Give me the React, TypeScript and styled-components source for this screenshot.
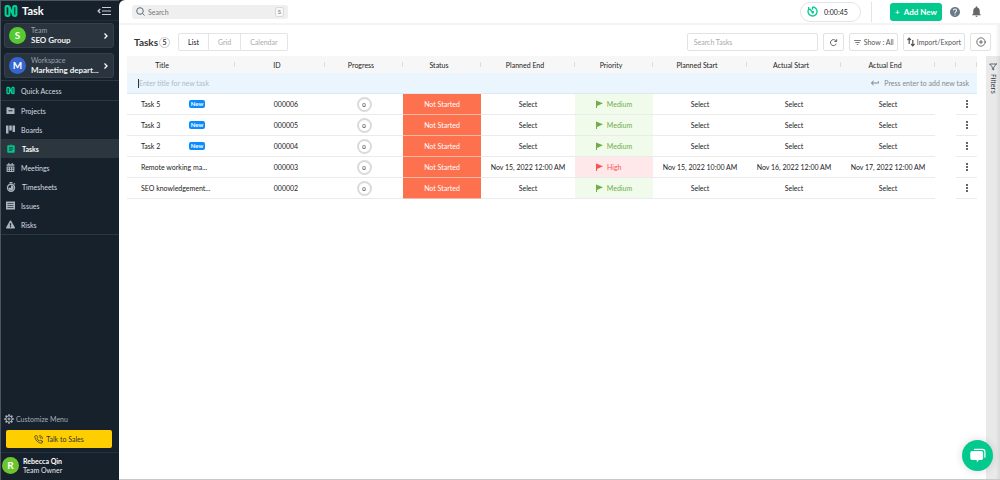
import React from "react";
import styled, { createGlobalStyle, css } from "styled-components";
import {
  MdAssignment,
  MdFilterList,
  MdHelp,
  MdNotifications,
  MdMoreVert,
  MdKeyboardReturn,
} from "react-icons/md";
import { FaCalendarAlt, FaExclamationTriangle } from "react-icons/fa";
import { FiPhoneCall, FiFilter, FiPlusCircle } from "react-icons/fi";

const GlobalStyle = createGlobalStyle`
  *, *::before, *::after { box-sizing: border-box; }
  body { margin: 0; background: #17212c; }
  button, input { font: inherit; color: inherit; margin: 0; }
  button { cursor: pointer; }
`;

const Shell = styled.div`
  display: flex;
  min-height: 100vh;
  font-family: Lato, "Open Sans", sans-serif;
  font-size: 7px;
  line-height: 10px;
  color: #3c4043;
`;

/* ---------- sidebar ---------- */

const Sidebar = styled.aside`
  flex: 0 0 119px;
  min-width: 0;
  display: flex;
  flex-direction: column;
  background: #17212c;
  border-left: 1px solid #4d5660;
  border-top: 1px solid #4d5660;
  color: #c3cad1;
`;

const Brand = styled.div`
  display: flex;
  align-items: center;
  gap: 4px;
  height: 20px;
  padding: 0 7px 0 3px;
  border-bottom: 1px solid #222d38;
`;

const BrandName = styled.span`
  flex: 1;
  font-size: 11px;
  line-height: 16px;
  font-weight: 700;
  color: #fff;
`;

const PlainButton = styled.button`
  display: flex;
  align-items: center;
  justify-content: center;
  padding: 0;
  border: 0;
  background: none;
`;

const Switchers = styled.div`
  display: flex;
  flex-direction: column;
  gap: 5px;
  padding: 2px 5px 2px 3px;
  border-bottom: 1px solid #2c3742;
`;

const SwitcherCard = styled.button`
  display: flex;
  align-items: center;
  gap: 5px;
  height: 25px;
  padding: 0 4px;
  border: 1px solid #35404a;
  border-radius: 3px;
  background: #2a343e;
  text-align: left;
`;

const SwitcherText = styled.span`
  flex: 1;
  min-width: 0;
  display: flex;
  flex-direction: column;
`;

const SwitcherLabel = styled.span`
  line-height: 9px;
  color: #98a2ab;
`;

const SwitcherValue = styled.span`
  white-space: nowrap;
  font-size: 8px;
  line-height: 10px;
  font-weight: 700;
  color: #f1f3f5;
`;

const Avatar = styled.span<{ $color: string }>`
  flex: 0 0 17px;
  height: 17px;
  border-radius: 50%;
  background: ${(p) => p.$color};
  color: #fff;
  font-size: 10px;
  line-height: 17px;
  font-weight: 700;
  text-align: center;
`;

const Menu = styled.nav`
  display: flex;
  flex-direction: column;
  border-bottom: 1px solid #2c3742;
`;

const MenuLink = styled.a<{ $active?: boolean }>`
  display: flex;
  align-items: center;
  gap: 6px;
  height: 19px;
  padding-left: 5px;
  text-decoration: none;
  color: #d6dce1;
  svg { flex: none; color: #a9b4bf; }
  ${(p) =>
    p.$active &&
    css`
      background: #2c363f;
      color: #fff;
      font-weight: 700;
      svg { color: #00c58b; }
    `}
`;

const SidebarFoot = styled.div`
  margin-top: auto;
  display: flex;
  flex-direction: column;
`;

const CustomizeButton = styled(PlainButton)`
  justify-content: flex-start;
  gap: 2px;
  height: 16px;
  padding-left: 3px;
  margin-bottom: 3px;
  color: #a5afb8;
`;

const SalesButton = styled.button`
  display: flex;
  align-items: center;
  justify-content: center;
  gap: 3px;
  height: 18px;
  margin: 0 7px 4px 5px;
  border: 0;
  border-radius: 2px;
  background: #ffce00;
  color: #33332a;
`;

const Profile = styled.div`
  display: flex;
  align-items: center;
  gap: 4px;
  height: 28px;
  padding: 0 0 2px 1px;
  border-top: 1px solid #243240;
  line-height: 9px;
  color: #e3e7ea;
`;

const ProfileName = styled.strong`
  display: block;
  color: #fff;
`;

/* ---------- main ---------- */

const Main = styled.main`
  flex: 1;
  min-width: 0;
  display: flex;
  flex-direction: column;
  background: #fff;
  border-radius: 6px 0 0 0;
  border-bottom: 1px solid #c9c9c9;
`;

const TopBar = styled.header`
  display: flex;
  align-items: center;
  height: 25px;
  padding: 0 17px 0 13px;
  border-bottom: 2px solid #f4f4f4;
`;

const GlobalSearch = styled.label`
  display: flex;
  align-items: center;
  gap: 3px;
  flex: 0 1 156px;
  height: 14px;
  padding: 0 4px;
  margin-right: auto;
  border-radius: 3px;
  background: #efefef;
  color: #5f6b76;
`;

const BareInput = styled.input`
  flex: 1;
  min-width: 0;
  padding: 0;
  border: 0;
  outline: 0;
  background: none;
  &::placeholder { color: #777; opacity: 1; }
`;

const Key = styled.kbd`
  width: 9px;
  height: 10px;
  border: 1px solid #dadada;
  border-radius: 2px;
  background: #f8f8f8;
  font: 700 6px/8px Lato, sans-serif;
  text-align: center;
  color: #999;
`;

const Timer = styled.button`
  display: flex;
  align-items: center;
  gap: 6px;
  width: 61px;
  height: 20px;
  padding: 0 6px;
  border: 1px solid #e4e4e4;
  border-radius: 10px;
  background: #fff;
  color: #222;
`;

const TopDivider = styled.span`
  width: 1px;
  height: 20px;
  margin: 0 18px 0 10px;
  background: #e4e4e4;
`;

const AddNew = styled.button`
  display: flex;
  align-items: center;
  justify-content: center;
  gap: 4px;
  width: 52px;
  height: 18px;
  padding: 0;
  border: 0;
  border-radius: 3px;
  background: #02c98d;
  color: #fff;
  font-size: 8px;
  font-weight: 700;
`;

const TopIcon = styled(PlainButton)<{ $color: string }>`
  width: 13px;
  margin-left: 6px;
  color: ${(p) => p.$color};
  & + & { margin-left: 9px; }
`;

const Toolbar = styled.div`
  display: flex;
  align-items: center;
  gap: 5px;
  height: 31px;
  padding: 3px 9px 0 15px;
  background: linear-gradient(270deg, #efefef, #fff 5px);
`;

const Heading = styled.h1`
  margin: 0;
  font-size: 10px;
  line-height: 14px;
  font-weight: 700;
  color: #333;
`;

const Count = styled.span`
  width: 11px;
  height: 11px;
  margin-left: -4px;
  border: 1px solid #ccc;
  border-radius: 6px;
  font-size: 7px;
  line-height: 9px;
  font-weight: 700;
  text-align: center;
`;

const Tabs = styled.div`
  display: flex;
  height: 18px;
  margin: 0 auto 0 3px;
  border: 1px solid #e4e4e4;
  border-radius: 2px;
`;

const Tab = styled.button<{ $active?: boolean }>`
  padding: 0 9px;
  border: 0;
  background: none;
  color: ${(p) => (p.$active ? "#111" : "#aaa")};
  & + & { border-left: 1px solid #e4e4e4; }
`;

const ToolBox = styled.button<{ $square?: boolean }>`
  display: flex;
  align-items: center;
  justify-content: center;
  gap: 2px;
  height: 18px;
  min-width: 21px;
  padding: 0 3px;
  border: 1px solid #e2e2e2;
  border-radius: 2px;
  background: #fff;
  white-space: nowrap;
  color: #555;
`;

const TaskSearch = styled.input`
  flex: 0 1 131px;
  min-width: 0;
  height: 18px;
  padding: 0 6px;
  border: 1px solid #e2e2e2;
  border-radius: 2px;
  outline: 0;
  &::placeholder { color: #aaa; opacity: 1; }
`;

const Content = styled.div`
  flex: 1;
  display: flex;
  gap: 9px;
  padding-left: 8px;
`;

const TableArea = styled.div`
  flex: 1;
  min-width: 0;
`;

const Table = styled.table`
  width: 100%;
  table-layout: fixed;
  border-collapse: separate;
  border-spacing: 0;
`;

const HeadCell = styled.th<{ $first?: boolean }>`
  height: 17px;
  padding: 0 6px 0 0;
  background: #f7f7f7 linear-gradient(#dcdcdc, #dcdcdc) right center / 1px 5px no-repeat;
  font-weight: 400;
  text-align: center;
  white-space: nowrap;
  color: #222;
  ${(p) => p.$first && css`padding-right: 38px;`}
`;

const NewCell = styled.td`
  height: 21px;
  padding: 0 8px 0 11px;
  background: #ebf5fe;
  border-bottom: 1px solid #dfe8ee;
`;

const NewRow = styled.div`
  display: flex;
  align-items: center;
  gap: 4px;
  color: #888;
`;

const NewTaskInput = styled(BareInput)`
  height: 9px;
  border-left: 1px solid #333;
  &::placeholder { color: #aebbc5; }
`;

const Cell = styled.td<{ $fill?: string; $ink?: string; $line?: string }>`
  height: 21px;
  padding: 0;
  border-bottom: 1px solid ${(p) => p.$line || "#ebebeb"};
  background: ${(p) => p.$fill || "#fff"};
  color: ${(p) => p.$ink || "#222"};
  text-align: center;
  white-space: nowrap;
`;

const GapCell = styled.td`
  padding: 0;
`;

const IdCell = styled(Cell)`
  padding-left: 12px;
`;

const TitleCell = styled(Cell)`
  padding: 0 0 0 14px;
  text-align: left;
`;

const TitleLine = styled.div`
  display: flex;
  align-items: center;
`;

const TitleText = styled.span`
  min-width: 48px;
`;

const NewBadge = styled.span`
  width: 16px;
  height: 8px;
  border-radius: 2px;
  background: #0a8cff;
  color: #fff;
  font-size: 6px;
  line-height: 8px;
  font-weight: 700;
  text-align: center;
`;

const Ring = styled.span`
  display: block;
  width: 15px;
  height: 15px;
  margin: 0 auto;
  border: 2px solid #dadada;
  border-radius: 50%;
  font-size: 6px;
  line-height: 11px;
`;

const Flagged = styled.span`
  display: flex;
  align-items: center;
  justify-content: center;
  gap: 4px;
`;

const FlagText = styled.span`
  min-width: 25px;
  text-align: left;
`;

const RowMenu = styled(PlainButton)`
  width: 100%;
  color: #444;
`;

const FilterRail = styled.button`
  display: flex;
  flex: 0 0 14px;
  flex-direction: column;
  align-items: center;
  gap: 3px;
  padding: 7px 1px 0 0;
  border: 0;
  background: linear-gradient(90deg, #e9e9e9 70%, #d9d9d9);
  color: #222c38;
`;

const RailText = styled.span`
  writing-mode: vertical-rl;
  font-family: "Open Sans", sans-serif;
`;

const ChatButton = styled.button`
  position: fixed;
  right: 7px;
  bottom: 9px;
  display: flex;
  align-items: center;
  justify-content: center;
  width: 31px;
  height: 31px;
  padding: 0;
  border: 0;
  border-radius: 50%;
  background: #02c98d;
  box-shadow: 0 0 8px rgba(0, 0, 0, 0.15);
`;

/* ---------- drawings ---------- */

const Logo = ({ size }: { size: number }) => (
  <svg width={size} height={size} viewBox="0 0 26 24" fill="none" stroke="#00d094" strokeWidth="4" strokeLinejoin="round" strokeLinecap="round" aria-hidden="true">
    <path d="M10 20 V6 Q10 3 7 3 H5 Q3 3 3 5 V19 Q3 21 5 21 H8 Q10 21 10 18" />
    <path d="M10 5 L17 19" />
    <path d="M17 5 V18 Q17 21 20 21 H21 Q23 21 23 19 V5 Q23 3 21 3 H19 Q17 3 17 6" />
  </svg>
);

const CollapseIcon = () => (
  <svg width="15" height="10" viewBox="0 0 15 10" fill="none" stroke="#c8ced4" aria-hidden="true">
    <path d="M5 1.5H14M5 5H14M5 8.5H14" strokeWidth="1" />
    <path d="M3.2 3L1.2 5L3.2 7" strokeWidth="1.4" />
  </svg>
);

const Chevron = () => (
  <svg width="6" height="8" viewBox="0 0 6 8" fill="none" stroke="#fff" strokeWidth="1.3" aria-hidden="true">
    <path d="M1.5 1.5L4 4L1.5 6.5" />
  </svg>
);

const FolderIcon = () => (
  <svg width="9" height="9" viewBox="0 0 18 18" fill="currentColor" aria-hidden="true">
    <path fillRule="evenodd" d="M1 2.5h6l2 2h8V16H1zM5 8.5v2h8v-2z" />
  </svg>
);

const BoardIcon = () => (
  <svg width="9" height="9" viewBox="0 0 18 18" fill="currentColor" aria-hidden="true">
    <path d="M0 1h5v16H0zM6.5 1h5v10h-5zM13 1h5v13h-5z" />
  </svg>
);

const StopwatchIcon = () => (
  <svg width="10" height="10" viewBox="0 0 20 20" aria-hidden="true">
    <path d="M7 0h6v2.4H7zM15 3l2-1 1.8 2-1.6 1.6z" fill="currentColor" />
    <circle cx="10" cy="11.5" r="7" fill="none" stroke="currentColor" strokeWidth="2.8" />
    <path d="M10 11.5V6.5a5 5 0 1 1-5 5z" fill="currentColor" />
  </svg>
);

const ListIcon = () => (
  <svg width="9" height="9" viewBox="0 0 18 18" aria-hidden="true">
    <path d="M0 1h18v16H0z" fill="currentColor" />
    <path d="M3 5h12M3 9h12M3 13h12" stroke="#17212c" strokeWidth="1.3" />
  </svg>
);

const GearIcon = () => (
  <svg width="10" height="10" viewBox="0 0 20 20" fill="none" stroke="#b8c1c9" aria-hidden="true">
    <circle cx="10" cy="10" r="6.4" strokeWidth="2" />
    <circle cx="10" cy="10" r="2" strokeWidth="2" />
    <path d="M10 0.5V3.5M10 16.5V19.5M0.5 10H3.5M16.5 10H19.5M3.3 3.3L5.4 5.4M14.6 14.6L16.7 16.7M3.3 16.7L5.4 14.6M14.6 5.4L16.7 3.3" strokeWidth="3" />
  </svg>
);

const SearchIcon = () => (
  <svg width="9" height="9" viewBox="0 0 18 18" fill="none" stroke="currentColor" strokeWidth="2" aria-hidden="true">
    <circle cx="8" cy="8" r="6.6" />
    <path d="M13 13L17 17" />
  </svg>
);

const TimerIcon = () => (
  <svg width="11" height="11" viewBox="0 0 22 22" fill="none" stroke="#02c98d" strokeWidth="2.6" aria-hidden="true">
    <path d="M11 2A9 9 0 1 1 3.6 6" />
    <path d="M3.4 1.8v4.8h5" />
    <path d="M11 2v5M11 12L7 8" />
    <circle cx="11.5" cy="12.5" r="1.4" />
  </svg>
);

const ReloadIcon = () => (
  <svg width="9" height="9" viewBox="0 0 18 18" fill="none" stroke="#555" strokeWidth="1.8" aria-hidden="true">
    <path d="M14.5 11.5A6 6 0 1 1 13.2 5L15 6.8" />
    <path d="M15.4 2.4V7H10.8" />
  </svg>
);

const TransferIcon = () => (
  <svg width="8" height="10" viewBox="0 0 8 10" fill="none" stroke="#555" strokeWidth="1.2" aria-hidden="true">
    <path d="M2.2 7V1.4M0.5 3L2.2 1.2L3.9 3" />
    <path d="M5.8 3V8.6M4.1 7L5.8 8.8L7.5 7" />
  </svg>
);

const FlagIcon = () => (
  <svg width="7" height="8" viewBox="0 0 7 8" fill="currentColor" aria-hidden="true">
    <path d="M0 0.5L7 3.2L1 6V8H0z" />
  </svg>
);

const ChatIcon = () => (
  <svg width="18" height="18" viewBox="0 0 18 18" aria-hidden="true">
    <path d="M5.5 2.4H13.5Q15.9 2.4 15.9 4.8V10.2" fill="none" stroke="#fff" strokeWidth="1.2" strokeLinecap="round" />
    <path d="M3 4h9.4q1.7 0 1.7 1.7v5.6q0 1.7-1.7 1.7H9.8L7.8 15.6V13H3q-1.7 0-1.7-1.7V5.7Q1.3 4 3 4z" fill="#fff" />
  </svg>
);

/* ---------- data ---------- */

const menu = [
  { label: "Projects", icon: <FolderIcon /> },
  { label: "Boards", icon: <BoardIcon /> },
  { label: "Tasks", icon: <MdAssignment size={10} />, active: true },
  { label: "Meetings", icon: <FaCalendarAlt size={9} /> },
  { label: "Timesheets", icon: <StopwatchIcon /> },
  { label: "Issues", icon: <ListIcon /> },
  { label: "Risks", icon: <FaExclamationTriangle size={9} /> },
];

const columns = [
  { name: "Title", width: 108 },
  { name: "ID", width: 90 },
  { name: "Progress", width: 78 },
  { name: "Status", width: 78 },
  { name: "Planned End", width: 94 },
  { name: "Priority", width: 78 },
  { name: "Planned Start", width: 94 },
  { name: "Actual Start", width: 94 },
  { name: "Actual End", width: 94 },
  { name: "", width: 21 },
  { name: "", width: 21 },
];

const totalWidth = columns.reduce((sum, c) => sum + c.width, 0);

const tasks = [
  { title: "Task 5", id: "000006", isNew: true },
  { title: "Task 3", id: "000005", isNew: true },
  { title: "Task 2", id: "000004", isNew: true },
  {
    title: "Remote working ma...",
    id: "000003",
    high: true,
    dates: ["Nov 15, 2022 12:00 AM", "Nov 15, 2022 10:00 AM", "Nov 16, 2022 12:00 AM", "Nov 17, 2022 12:00 AM"],
  },
  { title: "SEO knowledgement...", id: "000002" },
];

const unset = ["Select", "Select", "Select", "Select"];

export default function App() {
  return (
    <Shell>
      <GlobalStyle />
      <Sidebar>
        <Brand>
          <Logo size={14} />
          <BrandName>Task</BrandName>
          <PlainButton aria-label="Collapse menu"><CollapseIcon /></PlainButton>
        </Brand>
        <Switchers>
          <SwitcherCard>
            <Avatar $color="#56c930">S</Avatar>
            <SwitcherText>
              <SwitcherLabel>Team</SwitcherLabel>
              <SwitcherValue>SEO Group</SwitcherValue>
            </SwitcherText>
            <Chevron />
          </SwitcherCard>
          <SwitcherCard>
            <Avatar $color="#3566cf">M</Avatar>
            <SwitcherText>
              <SwitcherLabel>Workspace</SwitcherLabel>
              <SwitcherValue>Marketing depart...</SwitcherValue>
            </SwitcherText>
            <Chevron />
          </SwitcherCard>
        </Switchers>
        <Menu aria-label="Quick access">
          <MenuLink href="#quick"><Logo size={9} />Quick Access</MenuLink>
        </Menu>
        <Menu aria-label="Sections">
          {menu.map((m) => (
            <MenuLink key={m.label} href={"#" + m.label.toLowerCase()} $active={m.active}>
              {m.icon}
              {m.label}
            </MenuLink>
          ))}
        </Menu>
        <SidebarFoot>
          <CustomizeButton><GearIcon />Customize Menu</CustomizeButton>
          <SalesButton><FiPhoneCall size={9} />Talk to Sales</SalesButton>
          <Profile>
            <Avatar $color="#6cc52f">R</Avatar>
            <div>
              <ProfileName>Rebecca Qin</ProfileName>
              Team Owner
            </div>
          </Profile>
        </SidebarFoot>
      </Sidebar>

      <Main>
        <TopBar>
          <GlobalSearch>
            <SearchIcon />
            <BareInput placeholder="Search" aria-label="Search" />
            <Key>S</Key>
          </GlobalSearch>
          <Timer><TimerIcon />0:00:45</Timer>
          <TopDivider />
          <AddNew><span>+</span>Add New</AddNew>
          <TopIcon $color="#6b7a88" aria-label="Help"><MdHelp size={12} /></TopIcon>
          <TopIcon $color="#666" aria-label="Notifications"><MdNotifications size={13} /></TopIcon>
        </TopBar>

        <Toolbar>
          <Heading>Tasks</Heading>
          <Count>5</Count>
          <Tabs>
            <Tab $active>List</Tab>
            <Tab>Grid</Tab>
            <Tab>Calendar</Tab>
          </Tabs>
          <TaskSearch placeholder="Search Tasks" aria-label="Search tasks" />
          <ToolBox aria-label="Reload"><ReloadIcon /></ToolBox>
          <ToolBox><MdFilterList size={9} />Show : All</ToolBox>
          <ToolBox><TransferIcon />Import/Export</ToolBox>
          <ToolBox aria-label="Add column"><FiPlusCircle size={10} /></ToolBox>
        </Toolbar>

        <Content>
          <TableArea>
            <Table>
              <colgroup>
                {columns.map((c, i) => (
                  <col key={i} style={{ width: `${(c.width / totalWidth) * 100}%` }} />
                ))}
              </colgroup>
              <thead>
                <tr>
                  {columns.map((c, i) => <HeadCell key={i} $first={i === 0}>{c.name}</HeadCell>)}
                </tr>
              </thead>
              <tbody>
                <tr>
                  <NewCell colSpan={columns.length}>
                    <NewRow>
                      <NewTaskInput placeholder="Enter title for new task" aria-label="New task title" />
                      <MdKeyboardReturn size={10} />
                      <span>Press enter to add new task</span>
                    </NewRow>
                  </NewCell>
                </tr>
                {tasks.map((t) => {
                  const d = t.dates || unset;
                  return (
                    <tr key={t.id}>
                      <TitleCell>
                        <TitleLine>
                          <TitleText>{t.title}</TitleText>
                          {t.isNew && <NewBadge>New</NewBadge>}
                        </TitleLine>
                      </TitleCell>
                      <IdCell>{t.id}</IdCell>
                      <Cell><Ring>0</Ring></Cell>
                      <Cell $fill="#fd714f" $ink="#fff" $line="#f7b7a6">Not Started</Cell>
                      <Cell>{d[0]}</Cell>
                      <Cell $fill={t.high ? "#ffe8ea" : "#f1fbec"} $ink={t.high ? "#fa5252" : "#70ad47"}>
                        <Flagged>
                          <FlagIcon />
                          <FlagText>{t.high ? "High" : "Medium"}</FlagText>
                        </Flagged>
                      </Cell>
                      <Cell>{d[1]}</Cell>
                      <Cell>{d[2]}</Cell>
                      <Cell>{d[3]}</Cell>
                      <GapCell />
                      <Cell>
                        <RowMenu aria-label={"Actions for " + t.title}><MdMoreVert size={12} /></RowMenu>
                      </Cell>
                    </tr>
                  );
                })}
              </tbody>
            </Table>
          </TableArea>
          <FilterRail>
            <FiFilter size={8} />
            <RailText>Filters</RailText>
          </FilterRail>
        </Content>
      </Main>
      <ChatButton aria-label="Open chat"><ChatIcon /></ChatButton>
    </Shell>
  );
}
